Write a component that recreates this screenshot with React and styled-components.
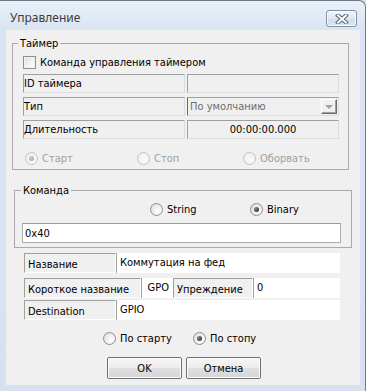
import React from 'react';
import styled, { createGlobalStyle } from 'styled-components';

const UI_FONT = `"DejaVu Sans Condensed", "Liberation Sans", "DejaVu Sans", sans-serif`;

const GlobalStyle = createGlobalStyle`
  html, body {
    margin: 0;
    padding: 0;
  }
  body {
    width: 366px;
    height: 391px;
    overflow: hidden;
    background: #d7e3f1;
  }
`;

const Window = styled.div`
  width: 366px;
  height: 391px;
  box-sizing: border-box;
  display: flex;
  flex-direction: column;
  background: linear-gradient(180deg, #e9f0f8 0px, #dae5f2 28px, #d6e2f0 100%);
  border-top: 1px solid #6e7a88;
  border-right: 1px solid #6e7a88;
  border-top-right-radius: 7px;
  font-family: ${UI_FONT};
  font-size: 11px;
  color: #000;
`;

const TitleBar = styled.div`
  height: 29px;
  box-sizing: border-box;
  display: flex;
  align-items: flex-start;
  justify-content: space-between;
  padding: 0 8px 0 10px;
`;

const Title = styled.div`
  margin-top: 10px;
  font-family: "Noto Sans", "Open Sans", sans-serif;
  font-size: 12px;
  line-height: 14px;
  color: #3d3d3d;
`;

const CloseButton = styled.div`
  margin-top: 9px;
  width: 31px;
  height: 17px;
  box-sizing: border-box;
  display: flex;
  align-items: center;
  justify-content: center;
  border: 1px solid #7f8fa4;
  border-radius: 3px;
  background: linear-gradient(180deg, #f1f5fa 0%, #dfe7f1 50%, #d2dded 51%, #dbe5f1 100%);
  box-shadow: inset 0 0 0 1px rgba(255, 255, 255, 0.7);
`;

const Client = styled.div`
  margin: 0 5px 0 6px;
  height: 355px;
  box-sizing: border-box;
  background: #f0f0f0;
  display: flex;
  flex-direction: column;
  align-items: flex-start;
`;

const Group = styled.fieldset`
  margin: ${p => p.$top}px 0 0 ${p => p.$left}px;
  width: ${p => p.$width}px;
  box-sizing: border-box;
  border: 1px solid #a9a9a9;
  padding: 0 ${p => p.$padRight}px 4px ${p => p.$padLeft}px;
  min-width: 0;
`;

const Legend = styled.legend`
  padding: 0 2px;
  margin-left: ${p => p.$shift}px;
  line-height: 13px;
  font-size: 11px;
`;

const CheckRow = styled.label`
  margin-top: 5px;
  height: 14px;
  display: flex;
  align-items: center;
  gap: 4px;
`;

const CheckBox = styled.span`
  width: 13px;
  height: 13px;
  box-sizing: border-box;
  border: 1px solid #8e8f8f;
  background: linear-gradient(135deg, #dcdcdc 0%, #f4f4f4 60%, #ffffff 100%);
  box-shadow: inset 0 0 0 1px #f2f2f2;
`;

const Table = styled.div`
  margin-top: 5px;
  display: grid;
  grid-template-columns: 162px 152px;
  column-gap: 2px;
  row-gap: 4px;
  grid-auto-rows: 19px;
`;

const Cell = styled.div`
  box-sizing: border-box;
  display: flex;
  align-items: center;
  justify-content: ${p => (p.$center ? 'center' : 'flex-start')};
  padding-left: ${p => p.$pad || 0}px;
  border-top: 1px solid #a0a0a0;
  border-left: 1px solid #a0a0a0;
  border-right: 1px solid #dcdcdc;
  border-bottom: 1px solid #dcdcdc;
  background: ${p => (p.$white ? '#fff' : '#f0f0f0')};
  white-space: nowrap;
  overflow: hidden;
`;

const Combo = styled.div`
  box-sizing: border-box;
  display: flex;
  align-items: center;
  justify-content: space-between;
  padding: 0 1px 0 2px;
  border-top: 1px solid #a0a0a0;
  border-left: 1px solid #696969;
  border-right: 1px solid #dcdcdc;
  border-bottom: 1px solid #dcdcdc;
  color: #6d6d6d;
`;

const ComboButton = styled.span`
  width: 16px;
  height: 15px;
  box-sizing: border-box;
  display: flex;
  align-items: center;
  justify-content: center;
  border-top: 1px solid #fff;
  border-left: 1px solid #fff;
  border-right: 1px solid #6a6a6a;
  border-bottom: 1px solid #6a6a6a;
  background: #f0f0f0;
  box-shadow: inset -1px -1px 0 #a0a0a0;
`;

const Arrow = styled.span`
  width: 0;
  height: 0;
  border-left: 4px solid transparent;
  border-right: 4px solid transparent;
  border-top: 4px solid #a0a0a0;
  margin: 1px 1px 0 0;
`;

const RadioRow = styled.div`
  margin-top: ${p => p.$top}px;
  height: 14px;
  display: grid;
  grid-template-columns: ${p => p.$cols};
  padding-left: ${p => p.$padLeft}px;
  align-items: center;
`;

const RadioItem = styled.label`
  display: flex;
  align-items: center;
  gap: 4px;
  color: ${p => (p.$disabled ? '#a0a0a0' : '#000')};
  white-space: nowrap;
`;

const RadioCircle = styled.span`
  width: 13px;
  height: 13px;
  box-sizing: border-box;
  border-radius: 50%;
  border: 1px solid ${p => (p.$disabled ? '#c3c3c3' : '#8e8f8f')};
  background: ${p =>
    p.$disabled
      ? 'radial-gradient(circle at 65% 65%, #fafafa 0%, #ececec 100%)'
      : 'radial-gradient(circle at 65% 65%, #ffffff 0%, #f2f2f2 40%, #d4d4d4 100%)'};
  display: flex;
  align-items: center;
  justify-content: center;
`;

const RadioDot = styled.span`
  width: 5px;
  height: 5px;
  border-radius: 50%;
  background: ${p =>
    p.$disabled
      ? 'radial-gradient(circle at 35% 35%, #d0d0d0, #9a9a9a)'
      : 'radial-gradient(circle at 35% 35%, #8a8a8a, #1a1a1a)'};
`;

const TextBox = styled.div`
  margin-top: 7px;
  height: 20px;
  box-sizing: border-box;
  display: flex;
  align-items: center;
  padding-left: 2px;
  border: 1px solid #abadb3;
  border-top-color: #9a9a9a;
  background: #fff;
`;

const Form = styled.div`
  margin: 5px 0 0 18px;
  width: 316px;
  display: flex;
  flex-direction: column;
`;

const FormRow = styled.div`
  margin-top: ${p => p.$top || 0}px;
  height: 20px;
  display: grid;
  grid-template-columns: ${p => p.$cols};
`;

const FormLabel = styled.div`
  box-sizing: border-box;
  display: flex;
  align-items: center;
  padding: 2px 0 0 3px;
  border-top: 1px solid #a0a0a0;
  border-left: 1px solid #a0a0a0;
  border-bottom: 1px solid #fff;
  border-right: 1px solid #fff;
  background: #f0f0f0;
  white-space: nowrap;
`;

const FormValue = styled.div`
  box-sizing: border-box;
  padding: ${p => (p.$right ? '3px 4px 0 0' : '3px 0 0 3px')};
  text-align: ${p => (p.$right ? 'right' : 'left')};
  background: #fff;
  border-left: 1px solid #a0a0a0;
  line-height: 13px;
  white-space: nowrap;
`;

const BottomRadios = styled.div`
  margin: 11px 0 0 97px;
  height: 14px;
  display: grid;
  grid-template-columns: 90px auto;
  align-items: center;
`;

const ButtonRow = styled.div`
  margin: 12px 0 0 101px;
  display: flex;
  gap: 4px;
`;

const Button = styled.button`
  width: 75px;
  height: 22px;
  box-sizing: border-box;
  font-family: ${UI_FONT};
  font-size: 11px;
  color: #000;
  border: 1px solid #707070;
  border-radius: 2px;
  background: linear-gradient(180deg, #f5f5f5 0%, #ececec 50%, #dfdfdf 51%, #d6d6d6 100%);
  box-shadow: inset 0 0 0 1px #fbfbfb;
  padding: 0;
`;

const Radio = ({ checked, disabled, children }) => (
  <RadioItem $disabled={disabled}>
    <RadioCircle $disabled={disabled}>{checked && <RadioDot $disabled={disabled} />}</RadioCircle>
    {children}
  </RadioItem>
);

const CloseIcon = () => (
  <svg width="14" height="10" viewBox="0 0 14 10">
    <path d="M3 1.5 L11 8.5 M11 1.5 L3 8.5" stroke="#5b6472" strokeWidth="4" strokeLinecap="square" />
    <path d="M3 1.5 L11 8.5 M11 1.5 L3 8.5" stroke="#ffffff" strokeWidth="2" strokeLinecap="square" />
  </svg>
);

const App = () => {
  return (
    <Window>
      <GlobalStyle />
      <TitleBar>
        <Title>Управление</Title>
        <CloseButton>
          <CloseIcon />
        </CloseButton>
      </TitleBar>
      <Client>
        <Group $top={7} $left={6} $width={337} $padLeft={10} $padRight={9}>
          <Legend $shift={-5}>Таймер</Legend>
          <CheckRow>
            <CheckBox />
            Команда управления таймером
          </CheckRow>
          <Table>
            <Cell>ID таймера</Cell>
            <Cell />
            <Cell>Тип</Cell>
            <Combo>
              По умолчанию
              <ComboButton>
                <Arrow />
              </ComboButton>
            </Combo>
            <Cell>Длительность</Cell>
            <Cell $center>00:00:00.000</Cell>
          </Table>
          <RadioRow $top={12} $cols="112px 106px auto" $padLeft={2}>
            <Radio checked disabled>Старт</Radio>
            <Radio disabled>Стоп</Radio>
            <Radio disabled>Оборвать</Radio>
          </RadioRow>
        </Group>

        <Group $top={14} $left={8} $width={338} $padLeft={7} $padRight={10}>
          <Legend $shift={-1}>Команда</Legend>
          <RadioRow $top={5} $cols="100px auto" $padLeft={128}>
            <Radio>String</Radio>
            <Radio checked>Binary</Radio>
          </RadioRow>
          <TextBox>0x40</TextBox>
        </Group>

        <Form>
          <FormRow $cols="92px 1fr">
            <FormLabel>Название</FormLabel>
            <FormValue>Коммутация на фед</FormValue>
          </FormRow>
          <FormRow $top={5} $cols="117px 32px 80px 1fr">
            <FormLabel>Короткое название</FormLabel>
            <FormValue $right>GPO</FormValue>
            <FormLabel>Упреждение</FormLabel>
            <FormValue>0</FormValue>
          </FormRow>
          <FormRow $top={2} $cols="92px 1fr">
            <FormLabel>Destination</FormLabel>
            <FormValue>GPIO</FormValue>
          </FormRow>
        </Form>

        <BottomRadios>
          <Radio>По старту</Radio>
          <Radio checked>По стопу</Radio>
        </BottomRadios>

        <ButtonRow>
          <Button>OK</Button>
          <Button>Отмена</Button>
        </ButtonRow>
      </Client>
    </Window>
  );
};

export default App;
